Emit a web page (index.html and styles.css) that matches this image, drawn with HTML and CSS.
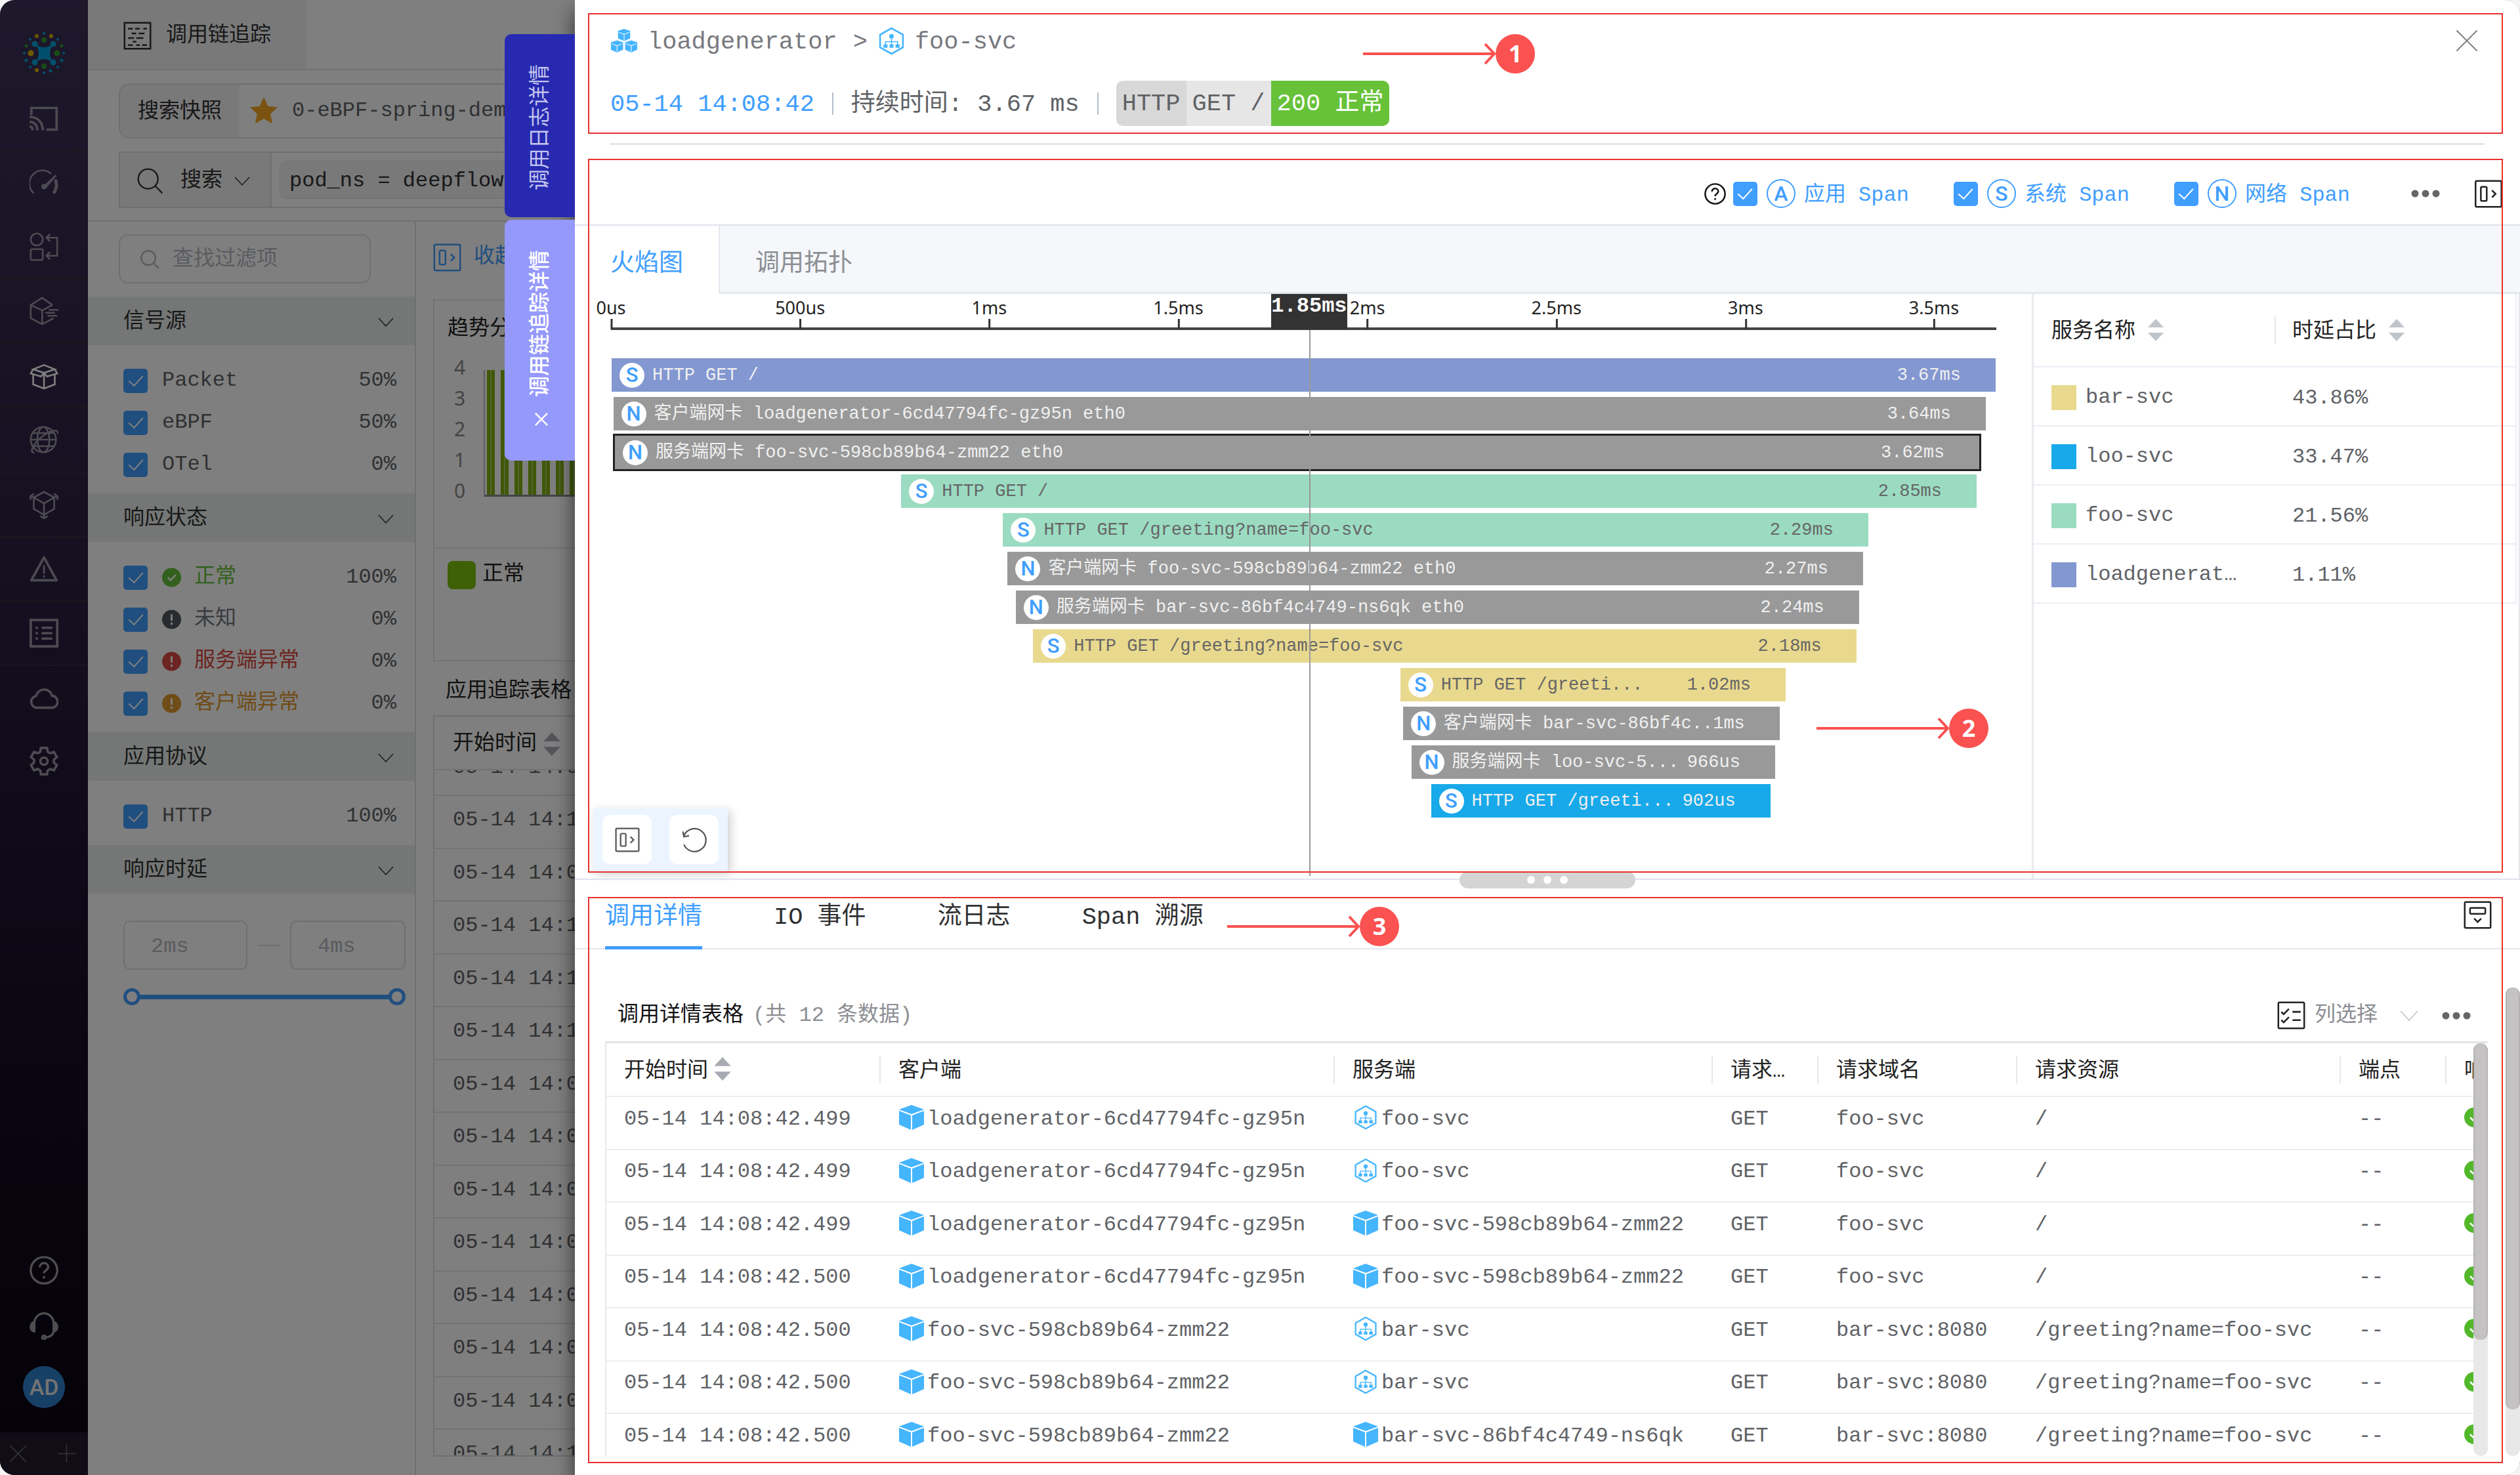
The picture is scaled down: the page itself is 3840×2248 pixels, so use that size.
FILE: index.html
```html
<!DOCTYPE html>
<html lang="zh-CN">
<head>
<meta charset="utf-8">
<meta name="viewport" content="width=device-width, initial-scale=1">
<title>调用链追踪</title>
<link rel="stylesheet" href="styles.css">
</head>
<body>
<svg class="defs" aria-hidden="true">
  <symbol id="i-panel" viewBox="0 0 24 24"><rect x="1" y="1" width="22" height="22" rx="1"/><rect x="5.500" y="6" width="5" height="12" rx="1"/><path d="M15 9l3 3-3 3"/></symbol>
  <symbol id="i-chev" viewBox="0 0 24 24"><path d="M1 6l11 12L23 6"/></symbol>
  <symbol id="i-x" viewBox="0 0 24 24"><path d="M1 1l22 22M23 1L1 23"/></symbol>
  <symbol id="i-search" viewBox="0 0 24 24"><circle cx="10" cy="10" r="9"/><path d="M16.500 16.500L23 23"/></symbol>
  <symbol id="i-sort" viewBox="0 0 24 34"><path d="M12 0l12 13H0zM12 34L0 21h24z" fill="currentColor" stroke="none"/></symbol>
  <symbol id="i-dots" viewBox="0 0 44 12"><g fill="currentColor" stroke="none"><circle cx="6" cy="6" r="5.500"/><circle cx="22" cy="6" r="5.500"/><circle cx="38" cy="6" r="5.500"/></g></symbol>
  <symbol id="i-pod" viewBox="0 0 40 38"><g fill="#45b5fd" stroke="none"><path d="M20 0l19 7-19 7L1 7z"/><path d="M1 9l18 7v22L1 30zM39 9l-18 7v22l18-8z"/></g></symbol>
  <symbol id="i-svc" viewBox="0 0 38 42"><g fill="none" stroke="#45b5fd"><path stroke-width="2.500" d="M19 2l17 9.500v19L19 40 2 30.500v-19z"/><path stroke-width="1.500" d="M19 15v7M10 27v-5h18v5M19 22v5"/></g><g fill="#45b5fd" stroke="none"><circle cx="19" cy="14" r="3.500"/><rect x="7" y="26" width="6" height="5"/><rect x="16" y="26" width="6" height="5"/><rect x="25" y="26" width="6" height="5"/></g></symbol>
  <symbol id="i-ok" viewBox="0 0 30 30"><circle cx="15" cy="15" r="15" fill="currentColor" stroke="none"/><path d="M9 15l4.500 4.500L21.500 11" fill="none" stroke="#fff" stroke-width="2.500"/></symbol>
  <symbol id="i-bang" viewBox="0 0 30 30"><circle cx="15" cy="15" r="15" fill="currentColor" stroke="none"/><path d="M15 7v10M15 20v3.500" fill="none" stroke="#fff" stroke-width="3"/></symbol>
  <symbol id="i-help" viewBox="0 0 24 24"><circle cx="12" cy="12" r="11"/><path d="M8.500 9.500c0-2 1.500-3.500 3.500-3.500s3.500 1.400 3.500 3.300c0 2.600-3.500 2.700-3.500 5.200M12 16.800v2"/></symbol>
</svg>

<div class="app">
  <nav class="rail">
    <svg class="logo" viewBox="0 0 64 64"><path d="M19 17c6 8 20 8 27 0l1 1c-8 7-8 21 0 28l-1 1c-7-8-21-8-27 0l-1-1c8-7 8-21 0-28z" fill="#00a0d8"/><g fill="#00a0d8"><circle cx="18" cy="18" r="4.500"/><circle cx="46" cy="18" r="4.500"/><circle cx="18" cy="46" r="4.500"/><circle cx="46" cy="46" r="4.500"/><circle cx="32" cy="2" r="2"/><circle cx="32" cy="62" r="2"/><circle cx="2" cy="32" r="2"/><circle cx="62" cy="32" r="2"/><circle cx="11" cy="11" r="2"/><circle cx="53" cy="11" r="2"/><circle cx="11" cy="53" r="2"/><circle cx="42" cy="59" r="2.500"/><circle cx="59" cy="43" r="2.500"/><circle cx="5" cy="43" r="2.500"/><circle cx="53" cy="53" r="2"/></g><g fill="#2f9a2a"><circle cx="32" cy="12" r="4"/><circle cx="52" cy="32" r="4.500"/><circle cx="32" cy="52" r="4"/><circle cx="5" cy="21" r="2.500"/><circle cx="59" cy="21" r="2.500"/></g><g fill="#d8b400"><circle cx="12" cy="32" r="4.500"/><circle cx="21" cy="6" r="3"/><circle cx="43" cy="6" r="3"/><circle cx="21" cy="58" r="3"/></g></svg>
    <div class="menu">
      <a href="#" class="cut thick" aria-label="大屏"><svg viewBox="0 0 24 24"><path d="M1.500 9V3h21v18H14"/><path d="M0 10.500C7 10.500 11 15 11 21.500M0 14.500c4 0 6.500 3 6.500 7M0 18.500c2 0 2.500 1 2.500 3"/></svg></a>
      <a href="#" aria-label="仪表盘"><svg viewBox="0 0 24 24"><path d="M3.500 20.500A10.500 10.500 0 0 1 18 4.300"/><path d="M21.500 9c1.500 4 1 8-1.500 11.500" stroke-width="2.600"/><path d="M12 15L22 5.500l-9 10.500z" fill="currentColor"/><circle cx="12" cy="15" r="1.500" fill="currentColor"/></svg></a>
      <a href="#" class="cut" aria-label="拓扑"><svg viewBox="0 0 24 24"><circle cx="6" cy="6" r="5"/><rect x="1" y="14" width="10" height="9" rx="1"/><path d="M14 4.500h9v15h-9M17 1.500l-3 3 3 3M17 16.500l-3 3 3 3"/></svg></a>
      <a href="#" class="cut" aria-label="应用"><svg viewBox="0 0 24 24"><path d="M19 7l-8.500-6L1 7v11l9.500 5 9.500-5M1 7l9.500 4.500L19 7M10.500 11.500V23M16 11h8M13 13.500h8M15 16h8"/></svg></a>
      <a href="#" class="cut on" aria-label="追踪"><svg viewBox="0 0 24 24"><path d="M12 3.500L3 7l9 3 9-3zM3 7l-2 3.500 8.500 2.500L12 10l2.500 3 8.500-2.500L21 7M3 11.500v8l9 3.500 9-3.500v-8M12 10v13"/></svg></a>
      <a href="#" class="cut" aria-label="网络"><svg viewBox="0 0 24 24"><circle cx="11.500" cy="12" r="10.500"/><ellipse cx="11.500" cy="12" rx="5" ry="10.500"/><path d="M1 12h21M3 6.500h17M3 17.500h17M4 23c-5 0 0-9 7-14S24 3 23.500 7"/></svg></a>
      <a href="#" class="cut" aria-label="资源"><svg viewBox="0 0 24 24"><path d="M12 1.500L3.500 6v9.500l8.500 5 8.500-5V6zM3.500 6l8.500 5 8.500-5M12 11v12M.8 8V5l3-2M.8 5l3 1M23.200 8V5l-3-2M23.200 5l-3 1M9 21.500l3 2 3-2"/></svg></a>
      <a href="#" class="cut thick" aria-label="告警"><svg viewBox="0 0 24 24"><path d="M12 2.500L1.500 21.500h21z" stroke-linejoin="round"/><path d="M12 9v7M12 17.500v1.500" stroke-width="1.600"/></svg></a>
      <a href="#" class="cut thick" aria-label="报表"><svg viewBox="0 0 24 24"><path d="M1 1h22v22H1zM10 7.500h9M10 12h9M10 16.500h9M5 7.500h2M5 12h2M5 16.500h2"/></svg></a>
      <a href="#" class="thick" aria-label="云"><svg viewBox="0 0 24 24"><path d="M6 20a5 5 0 0 1-.5-9.900A6.800 6.800 0 0 1 18.700 10 5 5 0 0 1 18 20z"/></svg></a>
      <a href="#" class="thick" aria-label="设置"><svg viewBox="0 0 24 24"><circle cx="12" cy="12" r="3"/><path d="M9.500 1h5l.6 3.200 2 1.200 3.200-1 2.400 4.300-2.500 2.200v2.200l2.500 2.200-2.400 4.300-3.200-1-2 1.200-.6 3.200h-5l-.6-3.200-2-1.200-3.200 1-2.400-4.300 2.500-2.200v-2.200L1.300 8.700l2.400-4.300 3.200 1 2-1.200z"/></svg></a>
    </div>
    <div class="account">
      <a href="#" aria-label="帮助"><svg><use href="#i-help"/></svg></a>
      <a href="#" aria-label="客服"><svg viewBox="0 0 24 24"><path d="M4 16V10a8 8 0 0 1 16 0v6c0 4-3 6-8 6"/><path d="M4 9v8c-4 0-4-7 0-8zM20 9v8c4 0 4-7 0-8z" fill="currentColor"/><circle cx="12" cy="22" r="1.500"/></svg></a>
      <button class="avatar">AD</button>
    </div>
    <div class="railfoot"><svg><use href="#i-x"/></svg><svg viewBox="0 0 24 24"><path d="M12 0v24M0 12h24"/></svg></div>
  </nav>

  <main class="page">
    <div class="pagetabs"><a href="#" class="pagetab"><svg viewBox="0 0 24 24"><path d="M1 1h22v22H1zM4 6h4M10 6h4M17 6h3M7 10h4M13 10h5M4 14h5M11 14h6M8 17h3M4 20h4M11 20h3M16 20h4"/></svg>调用链追踪</a></div>
    <div class="query">
      <div class="snap"><span class="snaplabel">搜索快照</span><svg class="star" viewBox="0 0 24 24"><path d="M12 0l3.600 7.800 8.400 1-6.200 5.900L19.500 23 12 18.800 4.500 23l1.700-8.300L0 8.800l8.400-1z"/></svg><span>0-eBPF-spring-demo</span></div>
      <div class="finder"><button class="mode"><svg class="mag"><use href="#i-search"/></svg>搜索<svg class="chev"><use href="#i-chev"/></svg></button><span class="tag">pod_ns = deepflow-otel-spring-demo</span></div>
    </div>
    <div class="cols">
      <aside class="filters">
        <label class="lookup"><svg><use href="#i-search"/></svg><input type="text" placeholder="查找过滤项" aria-label="查找过滤项"></label>
        <h2>信号源<svg><use href="#i-chev"/></svg></h2>
        <div class="opts">
          <label><input type="checkbox" checked>Packet<b>50%</b></label>
          <label><input type="checkbox" checked>eBPF<b>50%</b></label>
          <label><input type="checkbox" checked>OTel<b>0%</b></label>
        </div>
        <h2>响应状态<svg><use href="#i-chev"/></svg></h2>
        <div class="opts">
          <label class="ok"><input type="checkbox" checked><svg><use href="#i-ok"/></svg>正常<b>100%</b></label>
          <label class="unk"><input type="checkbox" checked><svg><use href="#i-bang"/></svg>未知<b>0%</b></label>
          <label class="err"><input type="checkbox" checked><svg><use href="#i-bang"/></svg>服务端异常<b>0%</b></label>
          <label class="warn"><input type="checkbox" checked><svg><use href="#i-bang"/></svg>客户端异常<b>0%</b></label>
        </div>
        <h2>应用协议<svg><use href="#i-chev"/></svg></h2>
        <div class="opts"><label><input type="checkbox" checked>HTTP<b>100%</b></label></div>
        <h2>响应时延<svg><use href="#i-chev"/></svg></h2>
        <div class="range"><input type="text" placeholder="2ms" aria-label="最小时延"><i></i><input type="text" placeholder="4ms" aria-label="最大时延"></div>
        <div class="slider"><i></i><i></i></div>
      </aside>
      <section class="results">
        <a href="#" class="fold"><svg><use href="#i-panel"/></svg>收起快速过滤</a>
        <div class="trend">
          <h3>趋势分析</h3>
          <div class="plot"><div class="ticks"><span>4</span><span>3</span><span>2</span><span>1</span><span>0</span></div><div class="columns"></div></div>
          <div class="legend"><i></i>正常</div>
        </div>
        <h3 class="listtitle">应用追踪表格</h3>
        <div class="list">
          <div class="listhead">开始时间<svg><use href="#i-sort"/></svg></div>
          <div class="listbody"><ul>
            <li>05-14 14:09</li><li>05-14 14:10</li><li>05-14 14:09</li><li>05-14 14:10</li><li>05-14 14:10</li><li>05-14 14:10</li><li>05-14 14:09</li><li>05-14 14:09</li><li>05-14 14:09</li><li>05-14 14:09</li><li>05-14 14:09</li><li>05-14 14:09</li><li>05-14 14:09</li><li>05-14 14:10</li>
          </ul></div>
        </div>
      </section>
    </div>
  </main>
  <div class="mask"></div>

  <div class="drawer">
    <button class="side log"><span>调用日志详情</span></button>
    <button class="side trace"><span>调用链追踪详情</span><svg><use href="#i-x"/></svg></button>

    <header class="head">
      <div class="path">
        <svg class="cubes" viewBox="0 0 40 36"><g fill="#45b5fd"><path d="M20 0l9 3v11l-9 4-9-4V3z"/><path d="M9.500 17l9 3v11l-9 4-9-4V20zM30.500 17l9 3v11l-9 4-9-4V20z"/></g><path d="M12 5l8 3 8-3M20 8v9M1.500 22l8 3 8-3M9.500 25v9M22.500 22l8 3 8-3M30.500 25v9" fill="none" stroke="#fff" stroke-width="1"/></svg>
        <span>loadgenerator</span><span class="gt">&gt;</span><svg class="hex"><use href="#i-svc"/></svg><span>foo-svc</span>
        <button class="close" aria-label="关闭"><svg><use href="#i-x"/></svg></button>
      </div>
      <div class="meta"><span class="time">05-14 14:08:42</span><i></i><span>持续时间: 3.67 ms</span><i></i><span class="badges"><span>HTTP</span><span>GET /</span><span>200 正常</span></span></div>
    </header>

    <div class="tools">
      <svg class="help"><use href="#i-help"/></svg>
      <label><input type="checkbox" checked><em>A</em><span>应用 Span</span></label>
      <label><input type="checkbox" checked><em>S</em><span>系统 Span</span></label>
      <label><input type="checkbox" checked><em>N</em><span>网络 Span</span></label>
      <button class="more" aria-label="更多"><svg><use href="#i-dots"/></svg></button>
      <button class="expand" aria-label="展开"><svg><use href="#i-panel"/></svg></button>
    </div>
    <div class="views"><a href="#" class="on">火焰图</a><a href="#">调用拓扑</a></div>

    <div class="flame">
      <div class="chart">
        <div class="axis">
          <span style="left:0%">0us</span><span style="left:13.65%">500us</span><span style="left:27.3%">1ms</span><span style="left:40.95%">1.5ms</span><span style="left:54.6%">2ms</span><span style="left:68.25%">2.5ms</span><span style="left:81.9%">3ms</span><span style="left:95.5%">3.5ms</span>
          <b class="now" style="left:50.4%">1.85ms</b>
        </div>
        <div class="bars">
          <div class="bar c-load" style="margin-left:.05%;width:99.9%"><em>S</em><span>HTTP GET /</span><b>3.67ms</b></div>
          <div class="bar c-net" style="margin-left:.17%;width:99.07%"><em>N</em><span>客户端网卡 loadgenerator-6cd47794fc-gz95n eth0</span><b>3.64ms</b></div>
          <div class="bar c-net picked" style="margin-left:.28%;width:98.5%"><em>N</em><span>服务端网卡 foo-svc-598cb89b64-zmm22 eth0</span><b>3.62ms</b></div>
          <div class="bar c-foo" style="margin-left:20.95%;width:77.63%"><em>S</em><span>HTTP GET /</span><b>2.85ms</b></div>
          <div class="bar c-foo" style="margin-left:28.3%;width:62.46%"><em>S</em><span>HTTP GET /greeting?name=foo-svc</span><b>2.29ms</b></div>
          <div class="bar c-net" style="margin-left:28.63%;width:61.75%"><em>N</em><span>客户端网卡 foo-svc-598cb89b64-zmm22 eth0</span><b>2.27ms</b></div>
          <div class="bar c-net" style="margin-left:29.22%;width:60.87%"><em>N</em><span>服务端网卡 bar-svc-86bf4c4749-ns6qk eth0</span><b>2.24ms</b></div>
          <div class="bar c-bar" style="margin-left:30.47%;width:59.43%"><em>S</em><span>HTTP GET /greeting?name=foo-svc</span><b>2.18ms</b></div>
          <div class="bar c-bar" style="margin-left:56.97%;width:27.82%"><em>S</em><span>HTTP GET /greeti...</span><b>1.02ms</b></div>
          <div class="bar c-net" style="margin-left:57.2%;width:27.16%"><em>N</em><span>客户端网卡 bar-svc-86bf4c..</span><b>1ms</b></div>
          <div class="bar c-net" style="margin-left:57.77%;width:26.26%"><em>N</em><span>服务端网卡 loo-svc-5...</span><b>966us</b></div>
          <div class="bar c-loo" style="margin-left:59.19%;width:24.5%"><em>S</em><span>HTTP GET /greeti...</span><b>902us</b></div>
          <i class="cursor" style="left:50.4%"></i>
        </div>
        <div class="kit"><button aria-label="面板"><svg><use href="#i-panel"/></svg></button><button aria-label="重置"><svg viewBox="0 0 24 24"><path d="M2 8a11 11 0 1 1 0 8.500M1 4l1 5 5-1"/></svg></button></div>
      </div>
      <div class="share">
        <table>
          <thead><tr><th>服务名称<svg><use href="#i-sort"/></svg></th><th>时延占比<svg><use href="#i-sort"/></svg></th></tr></thead>
          <tbody>
            <tr><td><i class="c-bar"></i><span>bar-svc</span></td><td>43.86%</td></tr>
            <tr><td><i class="c-loo"></i><span>loo-svc</span></td><td>33.47%</td></tr>
            <tr><td><i class="c-foo"></i><span>foo-svc</span></td><td>21.56%</td></tr>
            <tr><td><i class="c-load"></i><span>loadgenerat…</span></td><td>1.11%</td></tr>
          </tbody>
        </table>
      </div>
    </div>
    <div class="split"><div class="grip"><i></i><i></i><i></i></div></div>

    <div class="detail">
      <div class="dtabs"><a href="#" class="on">调用详情</a><a href="#">IO 事件</a><a href="#">流日志</a><a href="#">Span 溯源</a>
        <button aria-label="收起"><svg viewBox="0 0 24 24"><rect x="1" y="1" width="22" height="22" rx="1"/><rect x="5.500" y="6" width="13" height="5" rx="1"/><path d="M9 15l3 3 3-3"/></svg></button></div>
      <div class="dtitle"><h3>调用详情表格</h3><span>(共 12 条数据)</span>
        <button class="pick"><svg viewBox="0 0 24 24"><rect x="1" y="1" width="22" height="22" rx="1"/><path d="M3.500 9l2 2L10 6.500M3.500 16l2 2 4.500-4.500M13 9h7M13 16h7"/></svg>列选择<svg class="chev"><use href="#i-chev"/></svg></button>
        <button class="more" aria-label="更多"><svg><use href="#i-dots"/></svg></button></div>
      <div class="grid">
        <div class="clip"><table>
          <colgroup><col class="w1"><col class="w2"><col class="w3"><col class="w4"><col class="w5"><col class="w6"><col class="w4"><col class="w4"></colgroup>
          <thead><tr><th>开始时间<svg><use href="#i-sort"/></svg></th><th>客户端</th><th>服务端</th><th>请求类型</th><th>请求域名</th><th>请求资源</th><th>端点</th><th>响应</th></tr></thead>
          <tbody>
            <tr><td>05-14 14:08:42.499</td><td><svg class="pod"><use href="#i-pod"/></svg>loadgenerator-6cd47794fc-gz95n</td><td><svg class="svc"><use href="#i-svc"/></svg>foo-svc</td><td>GET</td><td>foo-svc</td><td>/</td><td>--</td><td><svg class="st"><use href="#i-ok"/></svg></td></tr>
            <tr><td>05-14 14:08:42.499</td><td><svg class="pod"><use href="#i-pod"/></svg>loadgenerator-6cd47794fc-gz95n</td><td><svg class="svc"><use href="#i-svc"/></svg>foo-svc</td><td>GET</td><td>foo-svc</td><td>/</td><td>--</td><td><svg class="st"><use href="#i-ok"/></svg></td></tr>
            <tr><td>05-14 14:08:42.499</td><td><svg class="pod"><use href="#i-pod"/></svg>loadgenerator-6cd47794fc-gz95n</td><td><svg class="pod"><use href="#i-pod"/></svg>foo-svc-598cb89b64-zmm22</td><td>GET</td><td>foo-svc</td><td>/</td><td>--</td><td><svg class="st"><use href="#i-ok"/></svg></td></tr>
            <tr><td>05-14 14:08:42.500</td><td><svg class="pod"><use href="#i-pod"/></svg>loadgenerator-6cd47794fc-gz95n</td><td><svg class="pod"><use href="#i-pod"/></svg>foo-svc-598cb89b64-zmm22</td><td>GET</td><td>foo-svc</td><td>/</td><td>--</td><td><svg class="st"><use href="#i-ok"/></svg></td></tr>
            <tr><td>05-14 14:08:42.500</td><td><svg class="pod"><use href="#i-pod"/></svg>foo-svc-598cb89b64-zmm22</td><td><svg class="svc"><use href="#i-svc"/></svg>bar-svc</td><td>GET</td><td>bar-svc:8080</td><td>/greeting?name=foo-svc</td><td>--</td><td><svg class="st"><use href="#i-ok"/></svg></td></tr>
            <tr><td>05-14 14:08:42.500</td><td><svg class="pod"><use href="#i-pod"/></svg>foo-svc-598cb89b64-zmm22</td><td><svg class="svc"><use href="#i-svc"/></svg>bar-svc</td><td>GET</td><td>bar-svc:8080</td><td>/greeting?name=foo-svc</td><td>--</td><td><svg class="st"><use href="#i-ok"/></svg></td></tr>
            <tr><td>05-14 14:08:42.500</td><td><svg class="pod"><use href="#i-pod"/></svg>foo-svc-598cb89b64-zmm22</td><td><svg class="pod"><use href="#i-pod"/></svg>bar-svc-86bf4c4749-ns6qk</td><td>GET</td><td>bar-svc:8080</td><td>/greeting?name=foo-svc</td><td>--</td><td><svg class="st"><use href="#i-ok"/></svg></td></tr>
          </tbody>
        </table></div>
        <div class="bar-v"><i></i></div>
      </div>
    </div>
    <div class="bar-v outer"><i></i></div>

    <div class="frame f1"></div><div class="frame f2"></div><div class="frame f3"></div>
    <div class="note n1"><svg viewBox="0 0 202 36"><path d="M0 18h200M186 3l14 15-14 15"/></svg><b>1</b></div>
    <div class="note n2"><svg viewBox="0 0 202 36"><path d="M0 18h200M186 3l14 15-14 15"/></svg><b>2</b></div>
    <div class="note n3"><svg viewBox="0 0 202 36"><path d="M0 18h200M186 3l14 15-14 15"/></svg><b>3</b></div>
  </div>
</div>
</body>
</html>
```
FILE: styles.css
```css
* { box-sizing: border-box; margin: 0; padding: 0; }
body { background: #f4f4f4; color: #606266; font: 32px/44px "Liberation Mono", "Noto Sans CJK SC", monospace; }
button, input { font: inherit; color: inherit; background: none; border: 0; }
a { color: inherit; text-decoration: none; }
em, i { font-style: normal; }
h2, h3 { font-size: 32px; font-weight: 400; }
svg { display: block; flex: none; fill: none; stroke: currentColor; stroke-width: 1.4; }
.defs { position: absolute; width: 0; height: 0; }
.app { position: relative; display: grid; grid-template-columns: 134px 1fr; grid-template-rows: minmax(0, 1fr); height: 100vh; overflow: hidden; border-radius: 22px; background: #fff; }

input[type=checkbox] { appearance: none; flex: none; width: 37px; height: 37px; border-radius: 5px; background: #409eff; display: grid; place-items: center; }
input[type=checkbox]::before { content: ""; width: 10px; height: 19px; margin-top: -6px; border: solid #fff; border-width: 0 2px 2px 0; transform: rotate(42deg); }

/* navigation rail */
.rail { display: flex; flex-direction: column; background: linear-gradient(#3c3058, #2b2040 40%, #140a20 75%, #0b0412); color: #9a97a4; }
.logo { flex: none; width: 64px; height: 64px; margin: 49px 35px 20px; stroke: none; }
.menu { display: flex; flex-direction: column; height: 1075px; }
.menu a { flex: 1; display: grid; place-items: center; }
.menu .cut { border-bottom: 2px solid #33303e; }
.menu .on { color: #fff; }
.menu svg, .account a svg { width: 44px; height: 44px; stroke-width: 1.4; }
.menu .thick svg { stroke-width: 2; }
.account { margin-top: auto; display: flex; flex-direction: column; align-items: center; gap: 40px; padding-bottom: 37px; color: #9a9ca0; }
.account a svg { stroke-width: 1.8; }
.avatar { width: 64px; height: 64px; border-radius: 50%; background: #2f80cc; color: #e6e6e6; font: 500 34px/64px Roboto, sans-serif; }
.railfoot { flex: none; height: 65px; display: flex; justify-content: space-between; align-items: center; padding: 0 19px 0 14px; background: #201a2e; color: #6a6870; }
.railfoot svg { width: 27px; height: 27px; }

/* page under the mask */
.page { display: flex; flex-direction: column; min-width: 0; color: #303133; }
.pagetabs { flex: none; height: 107px; border-bottom: 2px solid #e0e2e8; }
.pagetab { display: flex; align-items: center; gap: 22px; width: 332px; height: 105px; padding: 4px 0 0 54px; background: #f2f2f2; }
.pagetab svg { width: 43px; height: 43px; }
.query { flex: none; padding: 20px 0 19px 47px; border-bottom: 2px solid #dcdfe6; }
.snap { display: flex; align-items: center; height: 84px; margin-bottom: 20px; border: 2px solid #dcdfe6; border-radius: 16px 0 0 16px; line-height: 48px; color: #606266; }
.snaplabel { align-self: stretch; width: 182px; padding-left: 27px; line-height: 84px; background: #f2f2f2; border-radius: 14px 0 0 14px; color: #303133; }
.star { width: 42px; height: 42px; margin: 0 22px 0 16px; fill: #f5a623; stroke: none; }
.finder { display: flex; align-items: center; height: 86px; border: 2px solid #dcdfe6; }
.mode { display: flex; align-items: center; width: 231px; height: 82px; padding: 3px 0 0 26px; background: #f2f2f2; border-right: 2px solid #dcdfe6; }
.mag { width: 40px; height: 40px; margin-right: 26px; }
.mode .chev { width: 24px; height: 24px; margin-left: 18px; }
.tag { margin-left: 12px; padding: 4px 14px 0; line-height: 52px; border: 1px solid #e2e2e6; border-radius: 10px; background: #f2f2f2; white-space: nowrap; }
.cols { flex: 1; display: grid; grid-template-columns: 500px 1fr; grid-template-rows: minmax(0, 1fr); min-height: 0; }
.filters { border-right: 2px solid #dcdfe6; }
.lookup { display: flex; align-items: center; gap: 20px; width: 384px; height: 75px; margin: 19px 0 20px 47px; padding: 2px 0 0 31px; border: 2px solid #dcdfe6; border-radius: 14px; color: #b4b8c0; }
.lookup svg { width: 29px; height: 29px; stroke-width: 2; }
.lookup input { width: 260px; }
input::placeholder { color: #b4b8c0; }
.filters h2 { display: flex; align-items: center; justify-content: space-between; height: 74px; padding: 3px 32px 0 54px; background: #e8eeea; }
.filters h2 svg { width: 24px; height: 24px; }
.opts { padding: 22px 28px 12px 54px; color: #606266; }
.opts label { display: flex; align-items: center; height: 64px; }
.opts input { margin-right: 22px; }
.opts svg { width: 29px; height: 30px; margin-right: 20px; }
.opts b { margin-left: auto; font-weight: 400; color: #606266; }
.ok { color: #67c23a; } .unk { color: #707680; } .err { color: #d84a42; } .warn { color: #e0982e; }
.unk svg { color: #50565e; }
.range { display: flex; align-items: center; justify-content: space-between; padding: 41px 14px 0 54px; }
.range input { width: 189px; height: 75px; padding: 4px 0 0 40px; border: 2px solid #dcdfe6; border-radius: 10px; }
.range input:last-child { width: 176px; }
.range i { width: 36px; height: 2px; background: #dcdfe6; }
.slider { display: flex; justify-content: space-between; align-items: center; height: 26px; margin: 28px 14px 0 54px; background: linear-gradient(#409eff, #409eff) center / 92% 7px no-repeat; }
.slider i { width: 26px; height: 26px; border: 5px solid #409eff; border-radius: 50%; background: #fff; }
.results { display: flex; flex-direction: column; min-width: 0; min-height: 0; padding: 32px 0 28px 26px; }
.fold { display: flex; align-items: center; gap: 19px; height: 44px; flex: none; color: #409eff; }
.fold svg { width: 43px; height: 43px; }
.trend { flex: none; height: 552px; margin-top: 42px; border: 2px solid #e4e7ed; }
.trend h3 { padding: 22px 0 0 20px; color: #222; }
.plot { display: flex; height: 312px; margin-left: 2px; padding-top: 20px; border-bottom: 2px solid #e4e7ed; }
.ticks { display: flex; flex-direction: column; gap: 15px; width: 73px; padding-left: 28px; font: 30px/32px "Noto Sans", sans-serif; color: #888; }
.columns { flex: 1; height: 193px; margin-top: 20px; border-left: 2px solid #bbb; border-bottom: 3px solid #888; background: repeating-linear-gradient(90deg, transparent 0 3px, #80b010 3px 8px, #a8c860 8px 10px, #80b010 10px 15px, transparent 15px 21px); }
.legend { display: flex; align-items: center; gap: 10px; padding: 18px 20px; color: #222; }
.legend i { width: 43px; height: 43px; border-radius: 8px; background: #7cc00c; }
.listtitle { margin: 24px 0 14px 19px; color: #222; }
.list { flex: 1; display: flex; flex-direction: column; min-height: 0; border: 2px solid #dcdfe6; }
.listhead { display: flex; align-items: center; gap: 10px; height: 82px; padding: 4px 0 0 28px; flex: none; border-bottom: 2px solid #e4e7ed; color: #222; }
.listhead svg { width: 26px; height: 36px; color: #a8abb2; }
.listbody { display: flex; align-items: flex-start; overflow: hidden; }
.listbody ul { list-style: none; width: 100%; margin-top: -41px; }
.listbody li { height: 80px; padding: 15px 28px; border-bottom: 2px solid #e4e7ed; color: #606266; white-space: nowrap; }
.listbody li:nth-child(even) { height: 81px; }
.mask { position: absolute; inset: 0; background: rgba(0, 0, 0, .5); }

/* drawer */
.drawer { position: absolute; inset: 0 0 0 876px; display: flex; flex-direction: column; background: #fff; box-shadow: 0 16px 30px rgba(0, 0, 0, .6); }
.side { position: absolute; right: 100%; width: 107px; border-radius: 10px 0 0 10px; color: #fff; display: flex; flex-direction: column; align-items: center; padding: 46px 0 0 4px; }
.side span { writing-mode: vertical-rl; text-orientation: sideways; transform: rotate(180deg); line-height: 44px; }
.side svg { width: 20px; height: 20px; margin-top: 24px; stroke-width: 3; }
.log { top: 52px; height: 279px; background: #272ab0; color: #c4c5f0; }
.trace { top: 335px; height: 367px; background: #9599fb; font-weight: 500; }
.head { margin: 0 54px; padding: 25px 0 26px; border-bottom: 3px solid #e6e8ee; font-size: 37px; flex: none; }
.path { display: flex; align-items: center; height: 74px; color: #77797e; line-height: 48px; }
.path span { padding-top: 3px; }
.cubes { width: 42px; height: 37px; margin-right: 15px; stroke: none; }
.gt { margin: 0 17px 0 24px; }
.hex { width: 39px; height: 43px; margin-right: 16px; }
.close { margin: 0 10px 0 auto; }
.close svg { width: 34px; height: 34px; }
.meta { display: flex; align-items: center; height: 69px; margin-top: 24px; }
.meta .time { color: #409eff; }
.meta > span { padding-top: 2px; }
.meta i { width: 2px; height: 34px; margin: 0 27px; background: #b4bccc; }
.meta .badges { display: flex; padding: 0; line-height: 71px; height: 69px; border-radius: 10px; overflow: hidden; }
.badges span { padding: 0 9px; background: #e6e6e6; }
.badges span:first-child { background: #d8d8d8; }
.badges span:last-child { background: #67c23a; color: #fff; }
.tools { display: flex; align-items: center; height: 123px; flex: none; padding: 27px 26px 0 0; justify-content: flex-end; border-bottom: 2px solid #dfe3ec; color: #409eff; }
.tools label { display: flex; align-items: center; margin-left: 68px; }
.tools label span { padding-top: 5px; }
.tools .help { width: 33px; height: 33px; color: #111; stroke-width: 1.8; }
.tools .help + label { margin-left: 11px; }
.tools label em { width: 44px; height: 44px; margin: 0 13px 0 14px; border: 2px solid #409eff; border-radius: 50%; font: 500 32px/40px Roboto, sans-serif; text-align: center; }
.more svg { width: 44px; height: 12px; color: #666; }
.tools .more { margin: 0 52px 0 93px; }
.expand svg { width: 44px; height: 43px; color: #222; }
.views { display: flex; height: 104px; flex: none; background: #f5f7fb; border-bottom: 3px solid #e4e7ed; font-size: 37px; line-height: 118px; color: #8c8e93; }
.views a { height: 104px; padding: 0 54px; }
.views .on { border-right: 2px solid #e4e7ed; background: #fff; color: #409eff; }
.flame { display: grid; grid-template-columns: 1fr 744px; flex: none; height: 891px; }
.chart { position: relative; padding: 0 54px 0 55px; }
.axis { position: relative; height: 55px; border-bottom: 4px solid #444; font: 27px/36px "Noto Sans", sans-serif; color: #222; }
.axis span { position: absolute; top: 3px; height: 51px; transform: translateX(-50%); }
.axis span::after { content: ""; position: absolute; left: 50%; bottom: 0; width: 3px; height: 16px; margin-left: -1px; background: #333; }
.now { position: absolute; top: 0; height: 54px; width: 116px; margin-left: -58px; background: #333; color: #fff; text-align: center; font: 700 32px/38px "Liberation Mono", monospace; z-index: 1; }
.bars { position: relative; display: flex; flex-direction: column; gap: 8px; height: 832px; padding-top: 43px; }
.bar { display: flex; align-items: center; height: 51px; padding: 0 53px 0 12px; font-size: 27px; line-height: 46px; white-space: nowrap; color: #666; }
.bar em { width: 38px; height: 38px; margin-right: 12px; border-radius: 50%; background: #fff; color: #409eff; font: 500 31px/38px Roboto, sans-serif; text-align: center; }
.bar b { margin-left: auto; font-weight: 400; }
.c-load { background: #8397d1; } .c-net { background: #999; } .c-foo { background: #9bdbc2; } .c-bar { background: #e9d98e; } .c-loo { background: #17a9e9; }
.bar.c-load, .bar.c-net, .bar.c-loo { color: #f0f0f0; }
.picked { outline: 3px solid #222; }
.cursor { position: absolute; top: 0; bottom: 0; width: 2px; background: #999; }
.kit { position: absolute; left: 28px; bottom: 11px; display: flex; gap: 27px; padding: 10px 14px 11px; background: #ecf5ff; box-shadow: 4px 4px 14px rgba(0, 0, 0, .2); color: #555; }
.kit button { display: grid; place-items: center; width: 75px; height: 75px; border-radius: 12px; background: #fff; }
.kit svg { width: 38px; height: 38px; }
.share { border-left: 3px solid #eaecf0; padding-right: 3px; border-right: 2px solid #e4e7ed; }
table { border-collapse: collapse; }
th, td { text-align: left; font-weight: 400; white-space: nowrap; }
th { color: #222; }
th svg { display: inline-block; vertical-align: -6px; color: #c0c4cc; }
.share table { width: 100%; border-right: 2px solid #ebeef5; }
.share tr { height: 90px; border-bottom: 2px solid #ebeef5; }
.share thead tr { height: 111px; }
.share td { padding-top: 5px; }
.share th:first-child, .share td:first-child { width: 369px; padding-left: 27px; }
.share th { padding-top: 6px; background: linear-gradient(#e4e7ed, #e4e7ed) right 34px / 2px 42px no-repeat; }
.share th:last-child { background: none; }
.share th:last-child, .share td:last-child { padding-left: 25px; }
.share th svg { width: 24px; height: 34px; margin-left: 19px; }
.share i { display: inline-block; width: 38px; height: 38px; margin-right: 14px; vertical-align: middle; }
.share span { vertical-align: middle; }
.split { position: relative; flex: none; border-top: 2px solid #dfe3ec; }
.grip { position: absolute; left: 50%; top: -13px; width: 268px; height: 26px; margin-left: -134px; border-radius: 13px; background: #d4d4d4; display: flex; align-items: center; justify-content: center; gap: 13px; }
.grip i { width: 12px; height: 12px; border-radius: 50%; background: #fff; }

.detail { flex: 1; min-height: 0; display: flex; flex-direction: column; }
.dtabs { display: flex; align-items: flex-start; gap: 109px; height: 106px; flex: none; padding: 0 43px 0 46px; border-bottom: 2px solid #e4e7ed; font-size: 37px; line-height: 114px; color: #303133; }
.dtabs a { height: 106px; }
.dtabs .on { border-bottom: 5px solid #409eff; color: #409eff; }
.dtabs button { margin: 32px 0 0 auto; line-height: 44px; }
.dtabs svg, .pick svg { width: 43px; height: 43px; color: #222; }
.dtitle { display: flex; align-items: center; padding: 79px 75px 18px 65px; height: 140px; flex: none; color: #8c8e93; }
.dtitle h3 { margin-right: 14px; color: #111; }
.pick { display: flex; align-items: center; gap: 14px; margin-left: auto; }
.pick .chev { width: 28px; height: 28px; margin: 0 36px 0 20px; color: #c0c4cc; }
.grid { flex: 1; min-height: 0; display: flex; margin: 0 49px 29px 46px; border-top: 3px solid #e4e4e6; border-left: 2px solid #e8e8ea; }
.clip { flex: 1; min-width: 0; overflow: hidden; }
.clip table { table-layout: fixed; width: 2965px; }
.w1 { width: 418px; } .w2 { width: 692px; } .w3 { width: 576px; } .w4 { width: 161px; } .w5 { width: 303px; } .w6 { width: 493px; }
.clip th { height: 81px; padding: 6px 27px 0; overflow: hidden; text-overflow: ellipsis; background: linear-gradient(#e4e7ed, #e4e7ed) right center / 2px 42px no-repeat; }
.clip th svg { width: 28px; height: 36px; margin-left: 8px; color: #a8abb2; }
.clip td { height: 81px; padding: 0 0 12px 27px; }
.clip tr { border-bottom: 2px solid #ebeef0; }
.clip tr:nth-child(even) td { height: 80px; }
.clip td svg { display: inline-block; vertical-align: middle; margin: -4px 4px 0 0; }
.pod { width: 40px; height: 38px; }
.svc { width: 40px; height: 38px; }
.st { width: 30px; height: 30px; color: #52b82a; }
.bar-v { width: 22px; flex: none; background: #e8e8e8; border-radius: 11px; }
.bar-v i { display: block; height: 452px; border-radius: 11px; background: #c4c2c3; border: solid #b4b2b3; border-width: 0 2px; }
.outer { position: absolute; right: 0; top: 1505px; bottom: 29px; }
.outer i { height: 643px; }

/* guide frames and numbered notes */
.frame { position: absolute; left: 20px; right: 26px; border: 2px solid #e8312d; pointer-events: none; }
.f1 { top: 20px; height: 184px; } .f2 { top: 242px; height: 1088px; } .f3 { top: 1367px; bottom: 18px; }
.note { position: absolute; display: flex; align-items: center; color: #fa5151; }
.note svg { width: 202px; height: 36px; stroke-width: 4; }
.note b { width: 60px; height: 60px; border-radius: 50%; background: #fa5151; color: #fff; text-align: center; font: 700 36px/60px "Open Sans", sans-serif; }
.n1 { left: 1201px; top: 52px; } .n2 { left: 1892px; top: 1080px; } .n3 { left: 994px; top: 1382px; }
```
